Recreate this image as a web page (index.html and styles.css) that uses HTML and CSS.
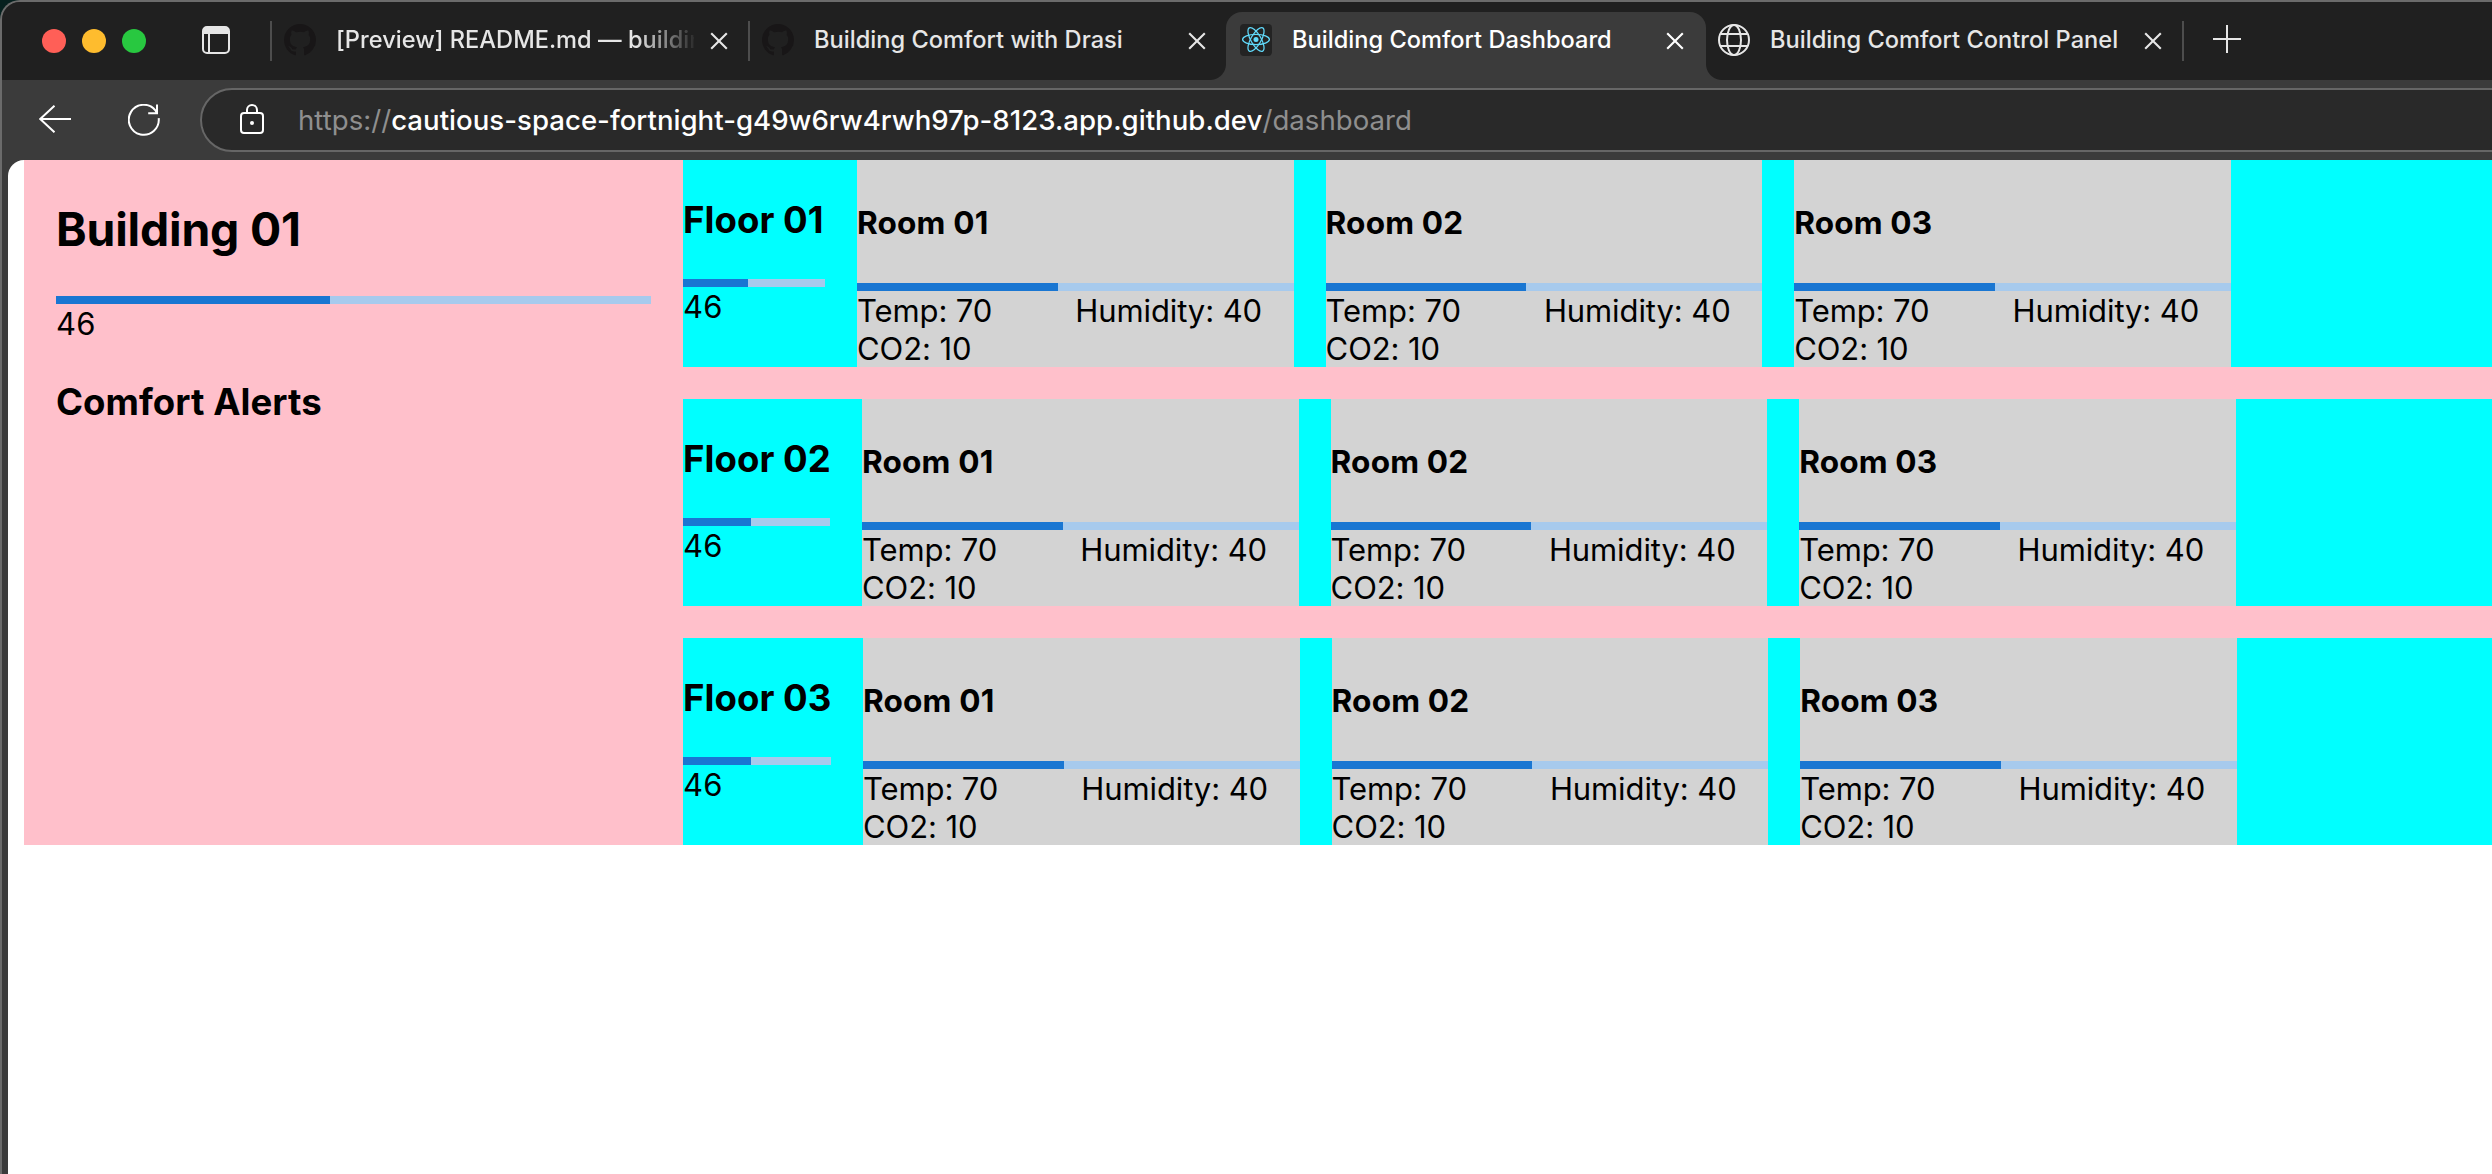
FILE: index.html
```html
<!DOCTYPE html>
<html lang="en">
<head>
<meta charset="utf-8">
<title>Building Comfort Dashboard</title>
<link rel="stylesheet" href="styles.css">
</head>
<body>
<svg class="defs" aria-hidden="true">
  <symbol id="close" viewBox="0 0 18 18"><path d="M1.2 1.2l15.6 15.6M16.800 1.2L1.2 16.800" fill="none" stroke="currentColor" stroke-width="2.1"/></symbol>
  <symbol id="github" viewBox="0 0 16 16"><path fill="currentColor" d="M8 0C3.58 0 0 3.58 0 8c0 3.54 2.29 6.53 5.470 7.590.4.070.550-.170.550-.380 0-.190-.010-.820-.010-1.490-2.010.370-2.530-.490-2.690-.940-.090-.230-.480-.940-.820-1.130-.280-.150-.680-.520-.010-.530.630-.010 1.080.580 1.230.820.720 1.210 1.870.870 2.330.660.070-.520.280-.870.510-1.070-1.780-.2-3.640-.890-3.640-3.950 0-.870.310-1.590.820-2.150-.080-.2-.360-1.020.080-2.120 0 0 .670-.210 2.2.820.640-.180 1.320-.270 2-.270s1.360.090 2 .270c1.530-1.040 2.2-.820 2.2-.820.440 1.100.160 1.920.080 2.120.510.560.820 1.270.820 2.150 0 3.070-1.870 3.750-3.650 3.950.290.250.540.730.540 1.480 0 1.070-.010 1.930-.010 2.200 0 .210.150.460.550.380A8.010 8.010 0 0 0 16 8c0-4.420-3.580-8-8-8z"/></symbol>
</svg>
<div class="window">
  <header class="tabstrip">
    <div class="lead">
      <div class="lights"><i class="light red"></i><i class="light yellow"></i><i class="light green"></i></div>
      <svg class="panel-icon" viewBox="0 0 28 28"><path fill="#e6e6e6" fill-rule="evenodd" d="M5 0h18a5 5 0 0 1 5 5v18a5 5 0 0 1-5 5H5a5 5 0 0 1-5-5V5a5 5 0 0 1 5-5zM2 8v15a3 3 0 0 0 3 3h1V8zM8 8v18h15a3 3 0 0 0 3-3V8z"/></svg>
    </div>
    <div class="tab divided">
      <svg class="favicon github"><use href="#github"/></svg>
      <span class="label fade">[Preview] README.md — building</span>
      <svg class="close"><use href="#close"/></svg>
    </div>
    <div class="tab divided">
      <svg class="favicon github"><use href="#github"/></svg>
      <span class="label">Building Comfort with Drasi</span>
      <svg class="close"><use href="#close"/></svg>
    </div>
    <div class="tab active">
      <svg class="favicon" viewBox="0 0 32 32"><rect width="32" height="32" rx="4" fill="#232323"/><circle cx="16" cy="15.500" r="2.500" fill="#61dafb"/><g fill="none" stroke="#61dafb" stroke-width="1.250"><ellipse cx="16" cy="15.500" rx="13.400" ry="5.100"/><ellipse cx="16" cy="15.500" rx="13.400" ry="5.100" transform="rotate(60 16 15.500)"/><ellipse cx="16" cy="15.500" rx="13.400" ry="5.100" transform="rotate(120 16 15.500)"/></g></svg>
      <span class="label">Building Comfort Dashboard</span>
      <svg class="close"><use href="#close"/></svg>
    </div>
    <div class="tab">
      <svg class="favicon" viewBox="0 0 32 32"><g fill="none" stroke="#e6e6e6" stroke-width="2"><circle cx="16" cy="16" r="15"/><ellipse cx="16" cy="16" rx="7" ry="15"/><path d="M2.500 10h27M2.500 22h27"/></g></svg>
      <span class="label">Building Comfort Control Panel</span>
      <svg class="close"><use href="#close"/></svg>
    </div>
    <div class="new-tab divided">
      <svg class="plus" viewBox="0 0 28 28"><path d="M14 0v28M0 14h28" fill="none" stroke="#e6e6e6" stroke-width="2"/></svg>
    </div>
  </header>
  <nav class="toolbar">
    <svg class="back" viewBox="0 0 32 28"><path d="M15.500.700L1.200 14l14.300 13.300M1.200 14H32" fill="none" stroke="#fff" stroke-width="2"/></svg>
    <svg class="reload" viewBox="0 0 32 32"><path d="M30.700 14.200A15 15 0 1 1 27.400 6.300L29 9.200M29 .500v8.700h-8.800" fill="none" stroke="#fff" stroke-width="2"/></svg>
    <div class="address">
      <svg class="lock" viewBox="0 0 24 30"><g fill="none" stroke="#fff" stroke-width="2"><rect x="1" y="9" width="22" height="20" rx="3"/><path d="M7 9V6a5 5 0 0 1 10 0v3"/></g><circle cx="12" cy="19" r="2" fill="#fff"/></svg>
      <span class="url">https://<b>cautious-space-fortnight-g49w6rw4rwh97p-8123.app.github.dev</b>/dashboard</span>
    </div>
  </nav>
  <div class="viewport">
    <main class="dashboard">
      <section class="building">
        <h2>Building 01</h2>
        <div class="meter"><i style="width:46%"></i></div>
        <div class="level">46</div>
        <h3>Comfort Alerts</h3>
      </section>
      <div class="floors">
        <section class="floor first">
          <div class="summary"><h3>Floor 01</h3><div class="meter"><i style="width:46%"></i></div><div class="level">46</div></div>
          <article class="room"><h4>Room 01</h4><div class="meter"><i style="width:46%"></i></div><div class="readings"><span>Temp: 70</span><span>Humidity: 40</span><span>CO2: 10</span></div></article>
          <article class="room"><h4>Room 02</h4><div class="meter"><i style="width:46%"></i></div><div class="readings"><span>Temp: 70</span><span>Humidity: 40</span><span>CO2: 10</span></div></article>
          <article class="room"><h4>Room 03</h4><div class="meter"><i style="width:46%"></i></div><div class="readings"><span>Temp: 70</span><span>Humidity: 40</span><span>CO2: 10</span></div></article>
        </section>
        <section class="floor second">
          <div class="summary"><h3>Floor 02</h3><div class="meter"><i style="width:46%"></i></div><div class="level">46</div></div>
          <article class="room"><h4>Room 01</h4><div class="meter"><i style="width:46%"></i></div><div class="readings"><span>Temp: 70</span><span>Humidity: 40</span><span>CO2: 10</span></div></article>
          <article class="room"><h4>Room 02</h4><div class="meter"><i style="width:46%"></i></div><div class="readings"><span>Temp: 70</span><span>Humidity: 40</span><span>CO2: 10</span></div></article>
          <article class="room"><h4>Room 03</h4><div class="meter"><i style="width:46%"></i></div><div class="readings"><span>Temp: 70</span><span>Humidity: 40</span><span>CO2: 10</span></div></article>
        </section>
        <section class="floor third">
          <div class="summary"><h3>Floor 03</h3><div class="meter"><i style="width:46%"></i></div><div class="level">46</div></div>
          <article class="room"><h4>Room 01</h4><div class="meter"><i style="width:46%"></i></div><div class="readings"><span>Temp: 70</span><span>Humidity: 40</span><span>CO2: 10</span></div></article>
          <article class="room"><h4>Room 02</h4><div class="meter"><i style="width:46%"></i></div><div class="readings"><span>Temp: 70</span><span>Humidity: 40</span><span>CO2: 10</span></div></article>
          <article class="room"><h4>Room 03</h4><div class="meter"><i style="width:46%"></i></div><div class="readings"><span>Temp: 70</span><span>Humidity: 40</span><span>CO2: 10</span></div></article>
        </section>
      </div>
    </main>
  </div>
</div>
</body>
</html>
```
FILE: styles.css
```css
* { box-sizing: border-box; }

body {
  margin: 0;
  overflow: hidden;
  background: #06201e;
  color: #000;
  font: 31px/38px Inter, "Liberation Sans", sans-serif;
}

h2, h3, h4 { margin: 0; font-weight: 700; white-space: nowrap; }
svg { flex: none; display: block; }
.defs { display: none; }

.window {
  display: flex;
  flex-direction: column;
  height: 1174px;
  overflow: hidden;
  background: #3b3b3b;
  border: solid #6b6b6b;
  border-width: 2px 0 0 2px;
  border-top-left-radius: 20px;
}

/* Tab strip */
.tabstrip {
  display: flex;
  flex: none;
  height: 78px;
  background: #202020;
}

.lead {
  display: flex;
  align-items: center;
  gap: 56px;
  width: 268px;
  padding-left: 40px;
}

.lights { display: flex; gap: 16px; }
.light { width: 24px; height: 24px; border-radius: 50%; }
.red { background: #ff5f57; }
.yellow { background: #febc2e; }
.green { background: #28c840; }
.panel-icon { width: 28px; height: 28px; margin-top: -2px; }

.tab {
  display: flex;
  align-items: center;
  width: 478px;
  padding: 0 20px 2px 14px;
  color: #e6e6e6;
}

.divided {
  background: linear-gradient(#4d4d4d, #4d4d4d) 0 19px / 2px 40px no-repeat;
}

.favicon { width: 32px; height: 32px; margin-right: 20px; }
.github { color: #181617; }

.label {
  flex: none;
  width: 358px;
  overflow: hidden;
  font-size: 23.6px;
  font-weight: 500;
  line-height: 34px;
  letter-spacing: 0.02px;
  white-space: nowrap;
}

.fade {
  -webkit-mask-image: linear-gradient(90deg, #000 300px, transparent 362px);
  mask-image: linear-gradient(90deg, #000 300px, transparent 362px);
}

.close { width: 18px; height: 18px; margin: 2px 0 0 16px; }

.active {
  position: relative;
  width: 480px;
  height: 68px;
  margin: 10px -2px 0 0;
  padding-bottom: 12px;
  border-radius: 16px 16px 0 0;
  background: #3b3b3b;
  color: #fff;
}

.active::before,
.active::after {
  content: "";
  position: absolute;
  bottom: 0;
  width: 16px;
  height: 16px;
}

.active::before { right: 100%; background: radial-gradient(circle at 0 0, #202020 15.5px, #3b3b3b 16.5px); }
.active::after { left: 100%; background: radial-gradient(circle at 100% 0, #202020 15.5px, #3b3b3b 16.5px); }

.new-tab { padding: 23px 0 0 31px; }
.plus { width: 28px; height: 28px; }

/* Toolbar */
.toolbar {
  display: flex;
  align-items: center;
  flex: none;
  height: 80px;
}

.back { width: 32px; height: 28px; margin: -2px 57px 0 37px; }
.reload { width: 32px; height: 32px; margin-right: 40px; }

.address {
  display: flex;
  align-items: center;
  flex: 1;
  height: 64px;
  margin-right: -40px;
  padding-left: 38px;
  border: 2px solid #666;
  border-radius: 32px;
  background: #292929;
}

.lock { width: 24px; height: 30px; margin: -2px 34px 0 0; }
.url { color: #8f8f8f; font-size: 27.6px; letter-spacing: 0.02px; white-space: nowrap; }
.url b { color: #fff; font-weight: 500; }

/* Page */
.viewport {
  flex: 1;
  margin-left: 6px;
  padding-left: 16px;
  overflow: hidden;
  border-top-left-radius: 16px;
  background: #fff;
}

.dashboard { display: flex; background: pink; }
.building { flex: none; width: 659px; padding: 0 32px; }
.building h2 { padding: 41px 0 39px; font-size: 46.3px; line-height: 56px; letter-spacing: -0.15px; }
.building h3 { padding-top: 37px; }
h3 { font-size: 36.6px; line-height: 45px; letter-spacing: 0.05px; }

.meter { height: 8px; background: #a7caed; }
.meter i { display: block; height: 100%; background: #1976d2; }
.level { padding-top: 1px; letter-spacing: 0.3px; }

.floors { display: flex; flex: 1; flex-direction: column; gap: 32px; }

.floor {
  display: grid;
  grid-template-rows: 207px;
  column-gap: 32px;
  background: cyan;
}

.first { grid-template-columns: 142px repeat(3, 436.6px); }
.second { grid-template-columns: 147px repeat(3, 436.6px); }
.third { grid-template-columns: 148px repeat(3, 436.6px); }

.summary h3 { padding: 38px 0 36px; }
.room { background: lightgray; }
.room h4 { padding: 44px 0 41px; font-size: 31.6px; line-height: 38px; letter-spacing: 0.15px; }
.readings { display: grid; grid-template-columns: 1fr 1fr; padding-top: 1px; letter-spacing: -0.1px; }
```
